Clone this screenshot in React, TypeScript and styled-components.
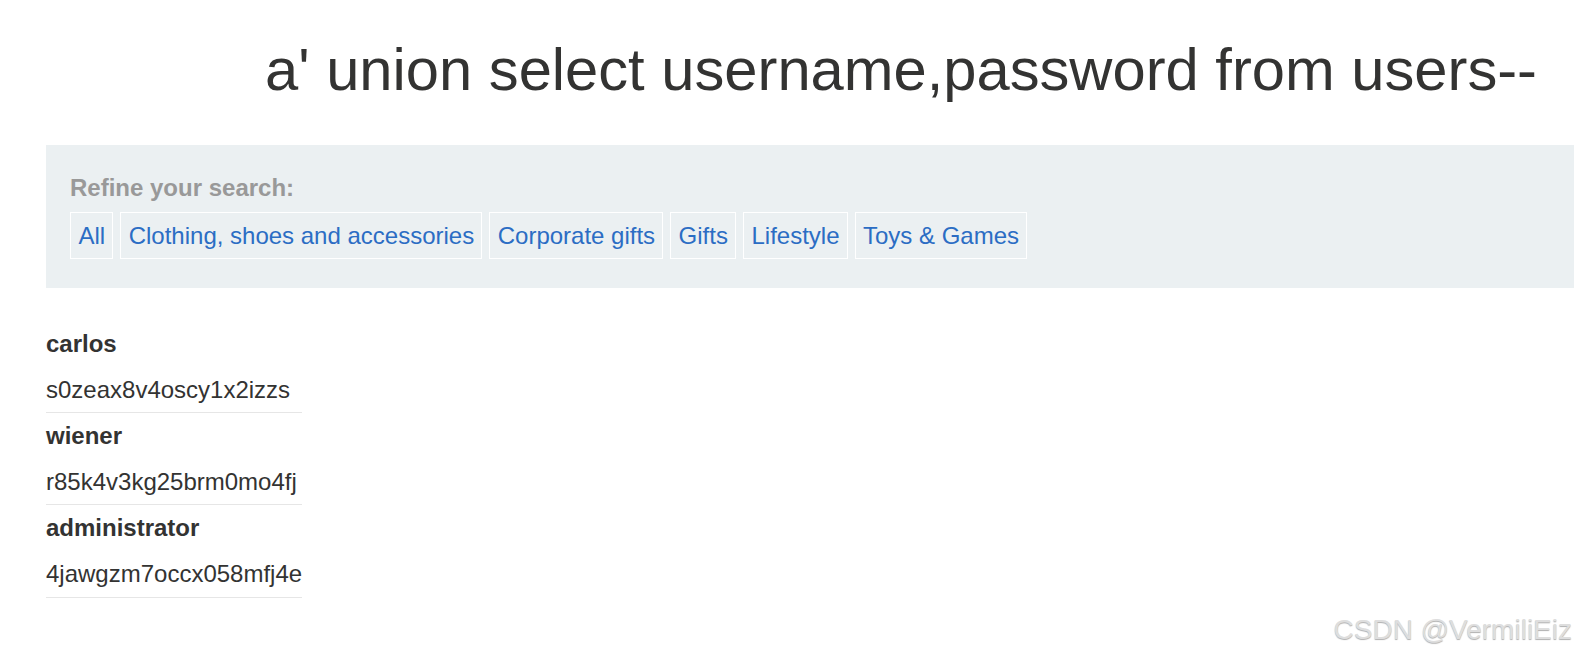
import styled, { createGlobalStyle } from "styled-components";

const GlobalStyle = createGlobalStyle`
  html, body {
    margin: 0;
    padding: 0;
    background: #fff;
    font-family: "Liberation Sans", Arial, sans-serif;
    color: #333332;
    overflow: hidden;
  }
`;

const Page = styled.div`
  position: relative;
  min-height: 658px;
  padding-left: 46px;
`;

const Title = styled.h1`
  margin: 0;
  padding: 35px 37px 0 0;
  font-size: 59.7px;
  font-weight: 400;
  line-height: 69px;
  text-align: right;
  color: #333332;
`;

const Filter = styled.section`
  margin-top: 41px;
  padding: 29px 24px 29px;
  background: #ebf0f2;
`;

const FilterLabel = styled.div`
  font-size: 24px;
  font-weight: 700;
  line-height: 28px;
  color: #999999;
  margin-bottom: 10px;
`;

const Tags = styled.div`
  display: flex;
  gap: 7px;
`;

const Tag = styled.a`
  display: block;
  padding: 8.5px 7px 8.5px 7.5px;
  border: 1px solid #ffffff;
  font-size: 24px;
  line-height: 28px;
  color: #2b6dc4;
  text-decoration: none;
`;

const Results = styled.table`
  margin-top: 33px;
  border-collapse: collapse;
`;

const Cell = styled.td<{ $head?: boolean }>`
  padding: 9px 0;
  font-size: 24px;
  line-height: 27.6px;
  font-weight: ${(p) => (p.$head ? 700 : 400)};
  color: #333332;
  border-bottom: ${(p) => (p.$head ? "none" : "1px solid #e6e6e6")};
  white-space: nowrap;
`;

const Watermark = styled.div`
  position: absolute;
  right: 2px;
  bottom: 12px;
  font-size: 28px;
  color: #dedede;
  text-shadow: 0 1px 1px #b0b0b0;
`;

const categories = [
  "All",
  "Clothing, shoes and accessories",
  "Corporate gifts",
  "Gifts",
  "Lifestyle",
  "Toys & Games",
];

const users = [
  { name: "carlos", password: "s0zeax8v4oscy1x2izzs" },
  { name: "wiener", password: "r85k4v3kg25brm0mo4fj" },
  { name: "administrator", password: "4jawgzm7occx058mfj4e" },
];

const App = () => {
  return (
    <Page>
      <GlobalStyle />
      <Title>a' union select username,password from users--</Title>
      <Filter>
        <FilterLabel>Refine your search:</FilterLabel>
        <Tags>
          {categories.map((c) => (
            <Tag key={c} href="#">
              {c}
            </Tag>
          ))}
        </Tags>
      </Filter>
      <Results>
        <tbody>
          {users.flatMap((u) => [
            <tr key={u.name}>
              <Cell $head>{u.name}</Cell>
            </tr>,
            <tr key={u.name + "-pw"}>
              <Cell>{u.password}</Cell>
            </tr>,
          ])}
        </tbody>
      </Results>
      <Watermark>CSDN @VermiliEiz</Watermark>
    </Page>
  );
};

export default App;
